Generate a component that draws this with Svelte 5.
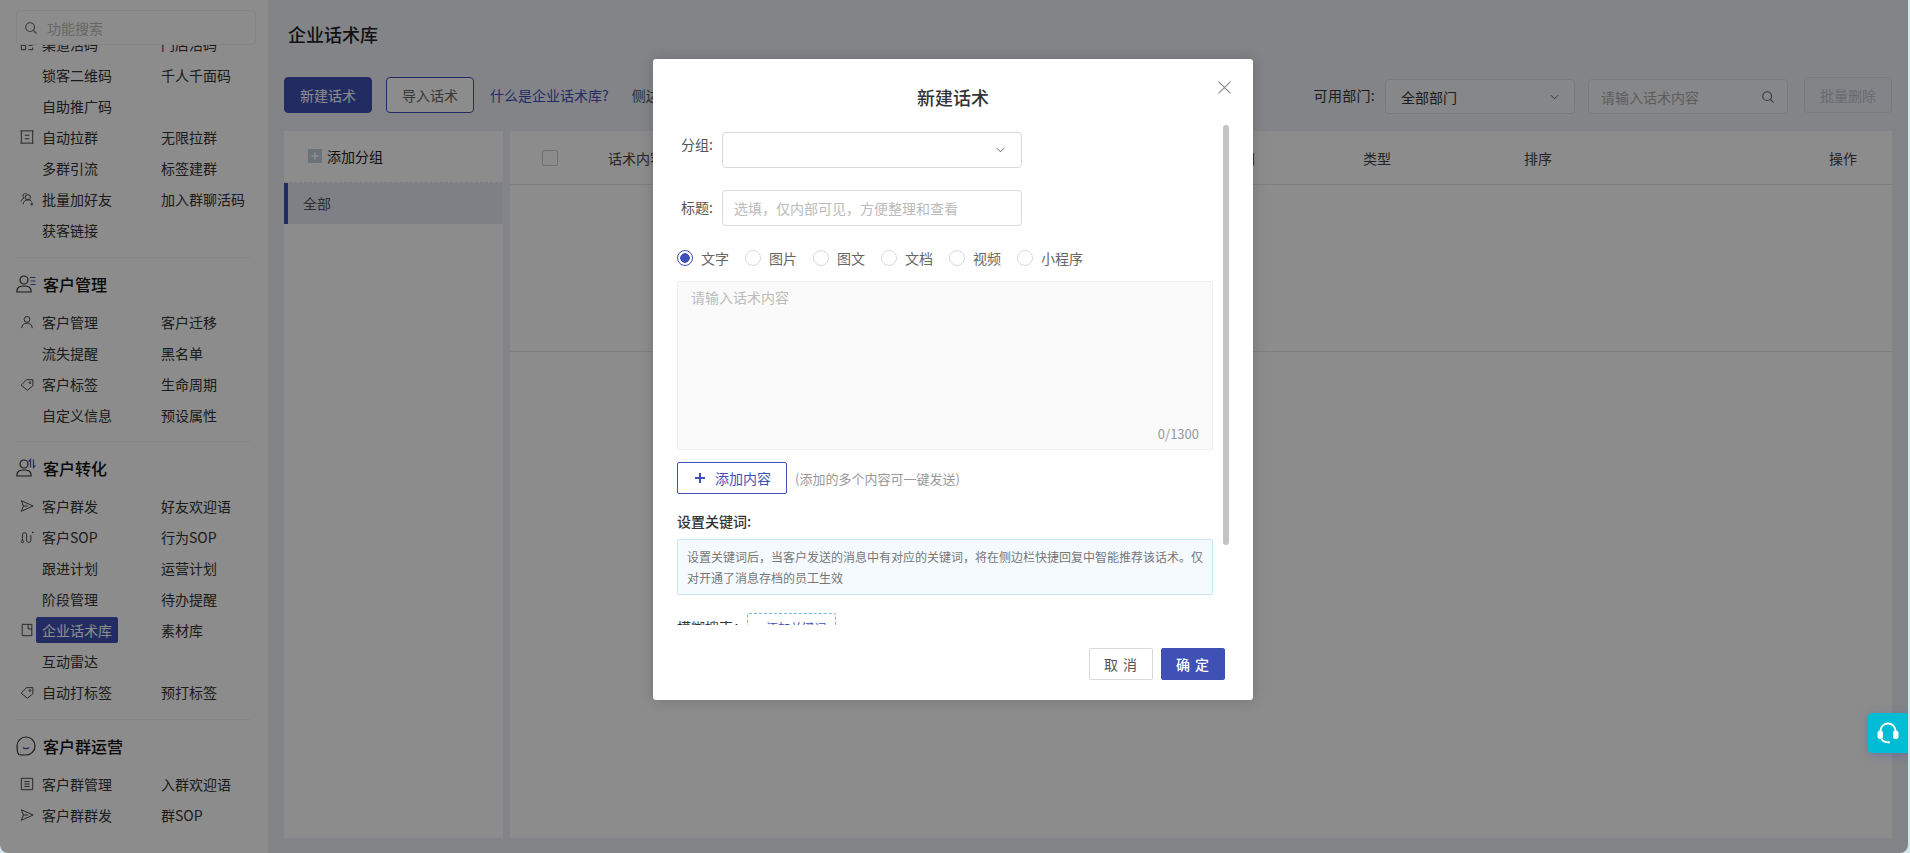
<script lang="ts">
  type Row = [string | null, string, string?];
  type Section = { title?: string; icon?: string; rows: Row[] };

  const circle = (cx: number, cy: number, r: number) =>
    `M${cx - r} ${cy}a${r} ${r} 0 1 0 ${r * 2} 0a${r} ${r} 0 1 0 ${-r * 2} 0`;

  const icons: Record<string, string[]> = {
    qr: ["M1.5 1.5h5v5h-5zM9.5 1.5h5v5h-5zM1.5 9.5h5v5h-5zM9.5 9.5h5M14.5 12v2.5h-5"],
    frame: ["M.5 1h15M.5 15h15M1.5 1v14M14.5 1v14M5.5 6h5M5.5 10h5"],
    addfriend: [circle(9, 6, 3), "M3.5 14c.4-3 2-5 5.500-5 2 0 3.300.7 4.200 1.800", "M7.500 2.300C6.200 1.200 4 1.800 3.500 3.500 3.100 5 3.800 6 4.800 6.800 2.800 7.500 1.500 9 1.200 11", "M13.500 12v3.500M11.800 13.800h3.400"],
    user: [circle(8, 5, 3.3), "M2 15c0-3.600 2.600-5.700 6-5.700s6 2.100 6 5.700"],
    tag: ["M1.300 9.300 7.600 3h7.100v7L8.500 15.200z", circle(11.4, 6.400, 1)],
    send: ["M1.500 2 15 8 1.500 14 4 8zM4 8h5"],
    sop: ["M2.800 12V5.500a2.400 2.400 0 0 1 4.800 0v6.300a2.400 2.400 0 0 0 4.800 0V6", circle(2.8, 13.2, 1.3), "M13.800 2.800h1.600M14.600 2v1.600"],
    book: ["M2.500 1.500h11v13h-11zM9.300 1.500v5.300h4.200"],
    list: ["M1.500 1.500h13v13h-13zM5 5.200h6M5 8h6M5 10.800h6"],
  };

  const sections: Section[] = [
    {
      rows: [
        ["qr", "渠道活码", "门店活码"],
        [null, "锁客二维码", "千人千面码"],
        [null, "自助推广码"],
        ["frame", "自动拉群", "无限拉群"],
        [null, "多群引流", "标签建群"],
        ["addfriend", "批量加好友", "加入群聊活码"],
        [null, "获客链接"],
      ],
    },
    {
      title: "客户管理",
      icon: "lines",
      rows: [
        ["user", "客户管理", "客户迁移"],
        [null, "流失提醒", "黑名单"],
        ["tag", "客户标签", "生命周期"],
        [null, "自定义信息", "预设属性"],
      ],
    },
    {
      title: "客户转化",
      icon: "arrows",
      rows: [
        ["send", "客户群发", "好友欢迎语"],
        ["sop", "客户SOP", "行为SOP"],
        [null, "跟进计划", "运营计划"],
        [null, "阶段管理", "待办提醒"],
        ["book", "企业话术库", "素材库"],
        [null, "互动雷达"],
        ["tag", "自动打标签", "预打标签"],
      ],
    },
    {
      title: "客户群运营",
      icon: "bubble",
      rows: [
        ["list", "客户群管理", "入群欢迎语"],
        ["send", "客户群群发", "群SOP"],
      ],
    },
  ];

  const msgTypes = ["文字", "图片", "图文", "文档", "视频", "小程序"];
  let msgType = $state("文字");
</script>

{#snippet chevron()}
  <svg class="chev" viewBox="0 0 10 6"><path d="M1 1l4 4 4-4" /></svg>
{/snippet}

{#snippet magnifier()}
  <svg class="mag" viewBox="0 0 16 16"><circle cx="7" cy="7" r="5" /><path d="M10.700 10.700 14.500 14.500" /></svg>
{/snippet}

<div class="page">
  <aside class="sidebar">
    <div class="fn-search">
      {@render magnifier()}
      <span>功能搜索</span>
    </div>
    <div class="menu">
      {#each sections as sec}
        <section class="sec">
          {#if sec.title}
            <div class="sec-head">
              {#if sec.icon === "bubble"}
                <svg class="head-icon" viewBox="0 0 20 20">
                  <path d="M2.500 18.500c-1-2-1.500-4.500-1.500-8.500a9 9 0 1 1 9 9c-2.500 0-5.500 0-7.500-.5z" />
                  <path class="blue" d="M7 11.500c1.500 1.500 4.500 1.500 6 0" />
                </svg>
              {:else}
                <svg class="head-icon" viewBox="0 0 20 20">
                  <circle cx="8" cy="6" r="4" />
                  <path d="M1 18v-1.500c0-3 3-4.500 7-4.500s7 1.500 7 4.500V18z" />
                  {#if sec.icon === "lines"}
                    <path class="blue" d="M14 3.500h5.500M14.500 7h5M14.500 10.500h5" />
                  {:else}
                    <path class="blue" d="M14.500 9.500v-8l-2 2.200M17.500 1.500v8l2-2.200" />
                  {/if}
                </svg>
              {/if}
              <h3>{sec.title}</h3>
            </div>
          {/if}
          {#each sec.rows as [ic, a, b]}
            <div class="row">
              <span class="ic">
                {#if ic}
                  <svg viewBox="0 0 16 16">
                    {#each icons[ic] as d}<path {d} />{/each}
                  </svg>
                {/if}
              </span>
              <span class="cell"><span class="lnk" class:on={a === "企业话术库"}>{a}</span></span>
              {#if b}<span class="lnk b">{b}</span>{/if}
            </div>
          {/each}
        </section>
      {/each}
    </div>
  </aside>

  <main class="main">
    <h1>企业话术库</h1>

    <div class="toolbar">
      <button class="btn primary">新建话术</button>
      <button class="btn outline">导入话术</button>
      <span class="link">什么是企业话术库?</span>
      <span class="link2">侧边栏快捷回复</span>
      <div class="tools">
        <span class="dept-label">可用部门:</span>
        <div class="field dept">全部部门 {@render chevron()}</div>
        <div class="field search"><span>请输入话术内容</span> {@render magnifier()}</div>
        <button class="btn ghost">批量删除</button>
      </div>
    </div>

    <div class="panels">
      <div class="groups">
        <div class="add-group">
          <span class="plus-box"><svg viewBox="0 0 14 14"><path d="M7 3.500v7M3.500 7h7" /></svg></span>
          添加分组
        </div>
        <div class="group on">全部</div>
      </div>
      <div class="table">
        <div class="thead">
          <span class="check"></span>
          <span>话术内容</span>
          <span>可用部门</span>
          <span>类型</span>
          <span>排序</span>
          <span>操作</span>
        </div>
        <div class="empty"></div>
      </div>
    </div>
  </main>

  <div class="mask"></div>

  <div class="modal">
    <button class="close" aria-label="关闭">
      <svg viewBox="0 0 12 12"><path d="M.5.500l11 11M11.500.500l-11 11" /></svg>
    </button>
    <h2>新建话术</h2>

    <div class="body">
      <div class="scroll-thumb"></div>

      <div class="form-row">
        <span class="label up">分组:</span>
        <div class="input">{@render chevron()}</div>
      </div>
      <div class="form-row second">
        <span class="label">标题:</span>
        <div class="input ph">选填，仅内部可见，方便整理和查看</div>
      </div>

      <div class="radios">
        {#each msgTypes as t}
          <button class="radio" class:on={msgType === t} onclick={() => (msgType = t)}>
            <span class="dot"></span>{t}
          </button>
        {/each}
      </div>

      <div class="textarea">
        <span class="ph-text">请输入话术内容</span>
        <span class="count">0/1300</span>
      </div>

      <div class="add-row">
        <button class="add-btn">
          <svg viewBox="0 0 10 10"><path d="M5 0v10M0 5h10" /></svg>
          添加内容
        </button>
        <span class="hint">(添加的多个内容可一键发送)</span>
      </div>

      <div class="kw-title">设置关键词:</div>
      <div class="notice">设置关键词后，当客户发送的消息中有对应的关键词，将在侧边栏快捷回复中智能推荐该话术。仅对开通了消息存档的员工生效</div>

      <div class="kw-row">
        <span>模糊搜索：</span>
        <button class="kw-add">+ 添加关键词</button>
      </div>
    </div>

    <div class="foot">
      <button class="fbtn">取 消</button>
      <button class="fbtn ok">确 定</button>
    </div>
  </div>

  <div class="support">
    <svg viewBox="0 0 24 24">
      <path class="band" d="M4.500 12V10a7.500 7.500 0 0 1 15 0v2" />
      <rect x="1.500" y="9.500" width="5.500" height="8.500" rx="2.500" />
      <rect x="17" y="9.500" width="5.500" height="8.500" rx="2.500" />
      <path class="band" d="M5.500 18c1 2 3 3 5.500 3.200" />
      <circle cx="12.500" cy="21.300" r="1.300" />
    </svg>
  </div>
</div>

<style>
  :global(body) {
    background: #d3e9ee;
    overflow: hidden;
  }

  .page {
    position: relative;
    display: flex;
    width: 1908px;
    height: 853px;
    overflow: hidden;
    border-radius: 0 0 8px 8px;
    background: #edf0f7;
    color: #333;
    font-family: "Noto Sans CJK SC", "Noto Sans", sans-serif;
    font-size: 14px;
  }

  button {
    font: inherit;
    cursor: pointer;
  }

  /* sidebar */
  .sidebar {
    flex: none;
    width: 268px;
    display: flex;
    flex-direction: column;
    background: #fff;
    overflow: hidden;
  }

  .fn-search {
    flex: none;
    display: flex;
    align-items: center;
    gap: 9px;
    box-sizing: border-box;
    height: 35px;
    margin: 10px 12px 0 16px;
    padding: 0 8px 0 7px;
    border: 1px solid #f0f0f0;
    border-radius: 4px;
    color: #bbb;
    position: relative;
    background: #fff;
  }

  .mag {
    flex: none;
    width: 14px;
    height: 14px;
    fill: none;
    stroke: #666;
    stroke-width: 1.300;
  }

  .menu {
    flex: 1;
    margin-top: -17px;
    padding-left: 16px;
  }

  .sec {
    width: 234px;
    padding-bottom: 11px;
    border-bottom: 1px solid #f2f2f2;
  }

  .sec:first-child {
    padding-bottom: 12px;
  }

  .sec:nth-child(3) {
    padding-bottom: 12px;
  }

  .sec:last-child {
    border-bottom: 0;
  }

  .sec-head {
    display: flex;
    align-items: center;
    height: 30px;
    margin: 11px 0 7px;
  }

  .head-icon {
    flex: none;
    width: 20px;
    height: 20px;
    margin-right: 7px;
    fill: none;
    stroke: #333;
    stroke-width: 1.200;
  }

  .head-icon .blue {
    stroke: #3f51b5;
  }

  h3 {
    margin: 0;
    font-size: 16px;
    font-weight: 500;
    color: #111;
  }

  .row {
    display: flex;
    align-items: center;
    height: 31px;
  }

  .ic {
    flex: none;
    width: 14px;
    height: 14px;
    margin: 0 9px 0 4px;
  }

  .ic svg {
    display: block;
    width: 14px;
    height: 14px;
    fill: none;
    stroke: #444;
    stroke-width: 1.100;
  }

  .cell {
    flex: none;
    width: 125px;
    margin-left: -7px;
  }

  .lnk {
    color: #333;
    white-space: nowrap;
  }

  .cell .lnk {
    display: inline-block;
    padding: 0 6px;
    height: 26px;
    line-height: 26px;
    border-radius: 2px;
  }

  .lnk.on {
    background: #3f51b5;
    color: #fff;
  }

  /* main */
  .main {
    flex: 1;
    min-width: 0;
    display: flex;
    flex-direction: column;
    padding: 0 16px 15px;
  }

  h1 {
    flex: none;
    margin: 0 0 9px 4px;
    height: 68px;
    line-height: 68px;
    font-size: 18px;
    font-weight: 500;
    color: #222;
  }

  .toolbar {
    flex: none;
    display: flex;
    align-items: flex-start;
    height: 36px;
    margin-bottom: 18px;
  }

  .btn {
    flex: none;
    width: 88px;
    height: 36px;
    padding: 0;
    border-radius: 4px;
    border: 1px solid #3f51b5;
  }

  .btn.primary {
    background: #3f51b5;
    color: #fff;
  }

  .btn.outline {
    margin-left: 14px;
    background: #fff;
    color: #666;
  }

  .btn.ghost {
    margin-left: 16px;
    background: transparent;
    border-color: #dcdfe6;
    color: #c0c4cc;
  }

  .link {
    margin-left: 16px;
    line-height: 36px;
    color: #3f51b5;
  }

  .link2 {
    margin-left: 23px;
    line-height: 36px;
    color: #555;
  }

  .tools {
    margin-left: auto;
    display: flex;
    align-items: flex-start;
  }

  .dept-label {
    margin-right: 10px;
    line-height: 36px;
    letter-spacing: 0.300px;
    color: #333;
  }

  .field {
    display: flex;
    align-items: center;
    justify-content: space-between;
    height: 35px;
    margin-top: 2px;
    box-sizing: border-box;
    border: 1px solid #dcdfe6;
    border-radius: 4px;
    background: #f5f6f9;
  }

  .dept {
    width: 190px;
    padding: 0 15px;
  }

  .search {
    width: 200px;
    margin-left: 13px;
    padding: 0 12px;
    color: #aaa;
  }

  .chev {
    flex: none;
    width: 9px;
    height: 6px;
    fill: none;
    stroke: #555;
    stroke-width: 1;
  }

  .panels {
    flex: 1;
    display: flex;
    gap: 7px;
    min-height: 0;
  }

  .groups {
    flex: none;
    width: 219px;
    background: #fff;
  }

  .add-group {
    display: flex;
    align-items: center;
    gap: 5px;
    height: 49px;
    padding-left: 24px;
    padding-bottom: 2px;
    border-bottom: 1px dashed #e4e4e4;
    color: #222;
  }

  .plus-box {
    display: flex;
    width: 14px;
    height: 14px;
    background: #c5d0dc;
  }

  .plus-box svg {
    width: 14px;
    height: 14px;
    fill: none;
    stroke: #fff;
    stroke-width: 1.600;
  }

  .group {
    height: 41px;
    line-height: 41px;
    padding-left: 19px;
    color: #555;
  }

  .group.on {
    padding-left: 15px;
    border-left: 4px solid #3f51b5;
    background: #e6e9f4;
  }

  .table {
    flex: 1;
    background: #fff;
    min-width: 0;
  }

  .thead {
    display: grid;
    grid-template-columns: 98px 591px 164px 161px 305px 63px;
    align-items: center;
    height: 53px;
    border-bottom: 1px solid #e8e8e8;
    color: #444;
  }

  .check {
    justify-self: start;
    margin-left: 32px;
    box-sizing: border-box;
    width: 16px;
    height: 16px;
    border: 1px solid #ccc;
    border-radius: 2px;
  }

  .empty {
    height: 166px;
    border-bottom: 1px solid #e8e8e8;
  }

  /* modal */
  .mask {
    position: absolute;
    inset: 0;
    background: rgba(0, 0, 0, 0.45);
  }

  .modal {
    position: absolute;
    left: 653px;
    top: 59px;
    display: flex;
    flex-direction: column;
    width: 600px;
    height: 641px;
    border-radius: 3px;
    background: #fff;
    box-shadow: 0 0 14px rgba(0, 0, 0, 0.18);
  }

  .close {
    position: absolute;
    top: 22px;
    right: 22px;
    width: 13px;
    height: 13px;
    padding: 0;
    border: 0;
    background: none;
  }

  .close svg {
    display: block;
    fill: none;
    stroke: #888;
    stroke-width: 1;
  }

  h2 {
    flex: none;
    margin: 0;
    height: 66px;
    padding-top: 26px;
    box-sizing: border-box;
    line-height: 24px;
    text-align: center;
    font-size: 18px;
    font-weight: 500;
    color: #333;
  }

  .body {
    position: relative;
    flex: none;
    height: 500px;
    padding: 7px 40px 0 24px;
    box-sizing: border-box;
    overflow: hidden;
  }

  .scroll-thumb {
    position: absolute;
    top: 0;
    right: 24px;
    width: 6px;
    height: 420px;
    border-radius: 3px;
    background: #c4c4c4;
  }

  .form-row {
    display: flex;
    align-items: center;
  }

  .form-row.second {
    margin-top: 22px;
  }

  .label {
    flex: none;
    width: 45px;
    margin-top: -2px;
    padding-left: 4px;
    box-sizing: border-box;
    color: #555;
  }

  .label.up {
    align-self: flex-start;
    margin-top: 0;
    line-height: 24px;
  }

  .input {
    display: flex;
    align-items: center;
    justify-content: flex-end;
    box-sizing: border-box;
    width: 300px;
    height: 36px;
    padding: 0 16px;
    border: 1px solid #d9d9d9;
    border-radius: 4px;
  }

  .input.ph {
    justify-content: flex-start;
    padding: 0 11px;
    color: #bbb;
  }

  .radios {
    display: flex;
    gap: 16px;
    margin-top: 22px;
    height: 20px;
  }

  .radio {
    display: flex;
    align-items: center;
    gap: 8px;
    padding: 0;
    border: 0;
    background: none;
    color: #666;
    line-height: 20px;
  }

  .dot {
    flex: none;
    width: 16px;
    height: 16px;
    box-sizing: border-box;
    border: 1px solid #d9d9d9;
    border-radius: 50%;
    background: #fff;
  }

  .radio.on .dot {
    border-color: #3f51b5;
    background: radial-gradient(circle, #3f51b5 0 4.500px, #fff 5px);
  }

  .textarea {
    display: flex;
    flex-direction: column;
    justify-content: space-between;
    box-sizing: border-box;
    height: 169px;
    margin-top: 13px;
    padding: 5px 13px 6px;
    border: 1px solid #eee;
    border-radius: 2px;
    background: #fafafa;
  }

  .ph-text {
    color: #bbb;
  }

  .count {
    align-self: flex-end;
    font-size: 13px;
    color: #999;
  }

  .add-row {
    display: flex;
    align-items: center;
    margin-top: 12px;
  }

  .add-btn {
    display: flex;
    align-items: center;
    gap: 10px;
    box-sizing: border-box;
    width: 110px;
    height: 32px;
    padding: 0 0 0 17px;
    border: 1px solid #3f51b5;
    border-radius: 2px;
    background: #fff;
    color: #3f51b5;
  }

  .add-btn svg {
    flex: none;
    width: 10px;
    height: 10px;
    fill: none;
    stroke: #3f51b5;
    stroke-width: 2;
  }

  .hint {
    margin-left: 8px;
    font-size: 13px;
    color: #999;
  }

  .kw-title {
    margin-top: 17px;
    line-height: 20px;
    font-weight: 500;
    color: #333;
  }

  .notice {
    box-sizing: border-box;
    height: 56px;
    margin-top: 8px;
    padding: 6px 9px;
    border: 1px solid #c8e6fb;
    border-radius: 2px;
    background: #f5faff;
    font-size: 12px;
    line-height: 21px;
    color: #777;
  }

  .kw-row {
    display: flex;
    align-items: center;
    gap: 0;
    margin-top: 18px;
    color: #333;
  }

  .kw-add {
    width: 89px;
    height: 28px;
    padding: 0;
    border: 1px dashed #7cb7e8;
    border-radius: 2px;
    background: #fff;
    font-size: 12px;
    color: #3f51b5;
  }

  .foot {
    flex: none;
    display: flex;
    justify-content: flex-end;
    gap: 8px;
    margin-top: 23px;
    padding-right: 28px;
  }

  .fbtn {
    width: 64px;
    height: 32px;
    padding: 0;
    border: 1px solid #d9d9d9;
    border-radius: 2px;
    background: #fff;
    color: #555;
    letter-spacing: 1px;
  }

  .fbtn.ok {
    border-color: #3f51b5;
    background: #3f51b5;
    color: #fff;
    font-weight: 500;
  }

  /* support */
  .support {
    position: absolute;
    top: 713px;
    right: 0;
    display: flex;
    align-items: center;
    justify-content: center;
    width: 40px;
    height: 40px;
    border-radius: 4px 0 0 4px;
    background: #00bcd4;
    box-shadow: 0 2px 10px rgba(63, 81, 181, 0.35);
  }

  .support svg {
    width: 24px;
    height: 24px;
    fill: #fff;
  }

  .support .band {
    fill: none;
    stroke: #fff;
    stroke-width: 1.800;
  }
</style>
